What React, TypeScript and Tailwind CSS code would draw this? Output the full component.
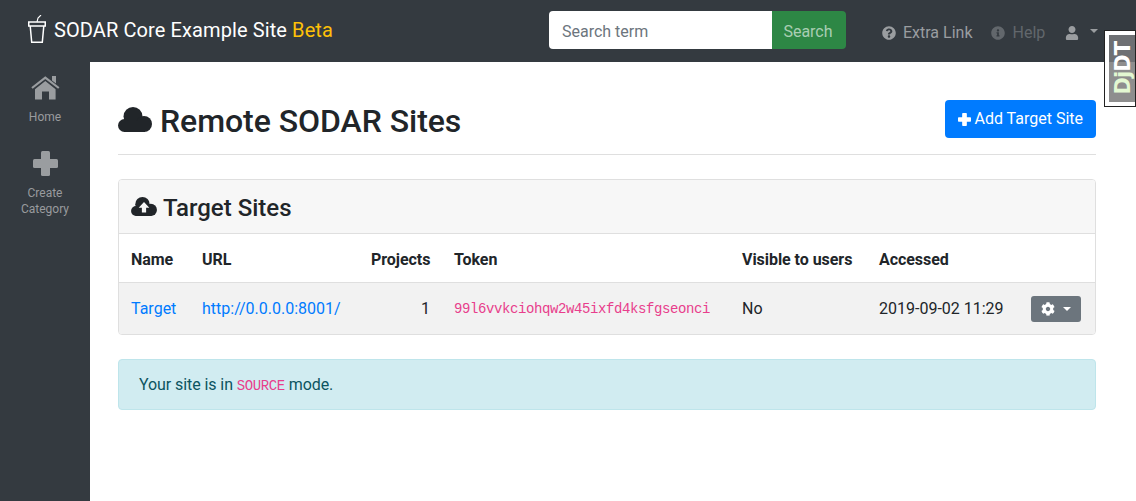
import * as React from "react"
import { FaCog, FaInfoCircle, FaQuestionCircle, FaUser } from "react-icons/fa"

function CupLogo() {
  return (
    <svg width="18" height="28" viewBox="0 0 18 28" fill="none" stroke="#fff" strokeWidth="1.5" className="block">
      <path d="M0.75 11v-4h16.5v4z" />
      <path d="M2.2 11l1.5 16.2h10.6l1.5-16.2" />
      <path d="M9 7l1-4 3-3" strokeWidth="1.1" />
    </svg>
  )
}

// the icons below are the older, rounder font-awesome shapes
function HomeIcon() {
  return (
    <svg width="29" height="24" viewBox="0 0 29 24" fill="currentColor" className="block">
      <path d="M4 13.2L14.3 5l10.3 8.2V23.5H18V15.5H11V23.5H4z" />
      <path d="M1 12L14.3 1.6 27.8 12" fill="none" stroke="currentColor" strokeWidth="2.2" />
      <path d="M21 0h4v7.5l-4-3z" />
    </svg>
  )
}

function PlusIcon({ size }: { size: number }) {
  return (
    <svg width={size} height={size} viewBox="0 0 25 25" fill="currentColor" className="block">
      <rect x="8" y="0" width="9" height="25" rx="1.5" />
      <rect x="0" y="8" width="25" height="9" rx="1.5" />
    </svg>
  )
}

function CloudShape() {
  return (
    <>
      <circle cx="15" cy="9.5" r="9.5" />
      <circle cx="26" cy="17" r="8" />
      <circle cx="6.5" cy="18.5" r="6.5" />
      <rect x="6" y="14" width="21" height="11" />
    </>
  )
}

function CloudIcon() {
  return (
    <svg width="34" height="25" viewBox="0 0 34 25" fill="currentColor" className="block">
      <CloudShape />
    </svg>
  )
}

function CloudUploadIcon() {
  return (
    <svg width="26" height="19" viewBox="0 0 34 25" fill="currentColor" className="block">
      <CloudShape />
      <path d="M17 6.5l7 7.5h-4.2v6.5h-5.6V14H10z" fill="#f7f7f7" />
    </svg>
  )
}

function SideItem({ icon, boxClass, label }: { icon: React.ReactNode; boxClass: string; label: React.ReactNode }) {
  return (
    <div className="flex flex-col items-center text-[12px] leading-[16px] text-[#999b9e] text-center">
      <div className={"text-[#9a9da0] flex items-center justify-center " + boxClass}>{icon}</div>
      <div className="mt-[6px]">{label}</div>
    </div>
  )
}

export default function App() {
  return (
    <div className="relative w-[1136px] h-[501px] overflow-hidden bg-white text-[#212529] text-[16px] font-['Roboto',sans-serif]">
      <nav className="h-[62px] bg-[#343a40] flex items-center pl-[28px] pb-[2px]">
        <div className="mr-[8px] -mt-[2px]"><CupLogo /></div>
        <div className="text-[20px] text-white tracking-[0.1px]">SODAR Core Example Site <span className="text-[#ffc107]">Beta</span></div>
        <div className="ml-[216px] flex w-[297px] h-[38px]">
          <input
            placeholder="Search term"
            className="w-[223px] h-[38px] bg-white rounded-l-[4px] pl-[13px] pt-[2px] text-[16px] outline-none placeholder:text-[#6c757d]"
          />
          <button className="flex-1 rounded-r-[4px] text-white/60 bg-[#2d8745] pt-[3px] pr-[2px]">Search</button>
        </div>
        <div className="ml-[36px] mt-[6px] flex items-center gap-[5px] text-[#9a9da0]">
          <FaQuestionCircle size={14} />
          <span className="ml-[2px]">Extra Link</span>
        </div>
        <div className="ml-[19px] mt-[6px] flex items-center gap-[5px] text-[#62676c]">
          <FaInfoCircle size={14} />
          <span className="ml-[2px]">Help</span>
        </div>
        <div className="ml-[20px] mt-[5px] flex items-center text-[#9a9da0]">
          <FaUser size={14} />
          <span className="ml-[11px] -mt-[3px] border-x-[4.8px] border-t-[4.8px] border-x-transparent border-t-[#9a9da0]" />
        </div>
      </nav>

      <div className="flex h-[439px]">
        <aside className="w-[90px] bg-[#343a40] pt-[11px] flex flex-col gap-[22px]">
          <SideItem icon={<HomeIcon />} boxClass="h-[30px]" label="Home" />
          <SideItem icon={<PlusIcon size={25} />} boxClass="h-[32px]" label={<>Create<br />Category</>} />
        </aside>

        <main className="flex-1 pl-[28px] pr-[40px]">
          <div className="flex items-start justify-between h-[93px] border-b border-[#dfdfdf]">
            <h1 className="flex items-center mt-[40px] text-[32px] font-medium leading-[38px] tracking-[-0.05px]">
              <span className="mr-[8px] -mt-[3px]"><CloudIcon /></span>
              Remote SODAR Sites
            </h1>
            <button className="flex items-center mt-[38px] h-[38px] pl-[13px] pr-[13px] bg-[#007bff] text-white rounded-[4px]">
              <span className="mr-[3px]"><PlusIcon size={13} /></span>
              Add Target Site
            </button>
          </div>

          <section className="mt-[24px] border border-[#dfdfdf] rounded-[4px] overflow-hidden">
            <div className="h-[54px] bg-[#f7f7f7] border-b border-[#dfdfdf] px-[12px] pt-[2px] flex items-center">
              <h2 className="flex items-center text-[24px] font-medium">
                <span className="mr-[6px] -mt-[2px]"><CloudUploadIcon /></span>
                Target Sites
              </h2>
            </div>
            <table className="w-[976px] table-fixed border-collapse">
              <colgroup>
                <col className="w-[71px]" />
                <col className="w-[169px]" />
                <col className="w-[83px]" />
                <col className="w-[288px]" />
                <col className="w-[137px]" />
                <col className="w-[152px]" />
                <col className="w-[76px]" />
              </colgroup>
              <thead>
                <tr className="h-[48px] text-left font-bold tracking-[-0.05px]">
                  <th className="pl-[12px] pt-[5px]">Name</th>
                  <th className="pl-[12px] pt-[5px]">URL</th>
                  <th className="pl-[12px] pt-[5px]">Projects</th>
                  <th className="pl-[12px] pt-[5px]">Token</th>
                  <th className="pl-[12px] pt-[5px]">Visible to users</th>
                  <th className="pl-[12px] pt-[5px]">Accessed</th>
                  <th />
                </tr>
              </thead>
              <tbody>
                <tr className="h-[52px] bg-[#f2f2f2] border-t border-[#dfdfdf]">
                  <td className="pl-[12px] pt-[2px] text-[#007bff]">Target</td>
                  <td className="pl-[12px] pt-[2px] text-[#007bff]">http://0.0.0.0:8001/</td>
                  <td className="pr-[12px] pt-[2px] text-right">1</td>
                  <td className="pl-[12px] pt-[2px] text-[14px] tracking-[-0.4px] text-[#e83e8c] font-['Liberation_Mono',monospace]">99l6vvkciohqw2w45ixfd4ksfgseonci</td>
                  <td className="pl-[12px] pt-[2px]">No</td>
                  <td className="pl-[12px] pt-[2px]">2019-09-02 11:29</td>
                  <td className="pl-[12px] pt-[2px]">
                    <button className="flex items-center justify-center gap-[8px] w-[50px] h-[26px] bg-[#6c757d] rounded-[3px] text-white">
                      <FaCog size={14} />
                      <span className="border-x-[4.2px] border-t-[4.2px] border-x-transparent border-t-white" />
                    </button>
                  </td>
                </tr>
              </tbody>
            </table>
          </section>

          <div className="mt-[24px] h-[51px] bg-[#d1ecf1] border border-[#bee5eb] rounded-[4px] px-[20px] flex items-center text-[#0c5460]">
            <span className="tracking-[-0.08px]">Your site is in <code className="text-[14px] tracking-[-0.4px] text-[#e83e8c] font-['Liberation_Mono',monospace]">SOURCE</code> mode.</span>
          </div>
        </main>
      </div>

      <div className="absolute right-0 top-[30px] w-[32px] h-[77px] bg-white border border-[#222] p-[4px] pr-0">
        <div className="w-full h-full pl-[3px] flex items-center justify-center bg-[linear-gradient(#6e7073_27px,#8e8e8e_27px)]">
          <span className="[writing-mode:vertical-rl] rotate-180 text-[21px] font-bold leading-none text-white font-['DejaVu_Sans',sans-serif] tracking-[-1px]">
            <span className="text-[#e3f8d2] mr-[0px]">Dj</span>DT
          </span>
        </div>
      </div>
    </div>
  )
}
